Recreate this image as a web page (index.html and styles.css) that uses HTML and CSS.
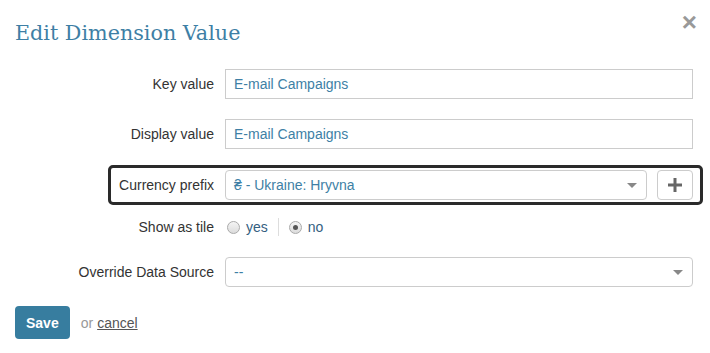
FILE: index.html
```html
<!DOCTYPE html>
<html lang="en">

<head>
    <meta charset="UTF-8">
    <title>Edit Dimension Value</title>
    <link rel="stylesheet" href="styles.css">
</head>

<body>

    <div class="dialog">
        <div class="dialog-header">
            <h1>Edit Dimension Value</h1>
            <span class="close">&times;</span>
        </div>

        <form class="dim-form">
            <div class="row">
                <label class="row-label" for="keyValue">Key value</label>
                <input class="text-input" type="text" id="keyValue" value="E-mail Campaigns">
            </div>

            <div class="row">
                <label class="row-label" for="displayValue">Display value</label>
                <input class="text-input" type="text" id="displayValue" value="E-mail Campaigns">
            </div>

            <!-- highlighted row -->
            <div class="row row-highlight">
                <label class="row-label">Currency prefix</label>
                <div class="select">
                    <span>&#8372; - Ukraine: Hryvna</span>
                    <span class="caret"></span>
                </div>
                <button type="button" class="add-btn">
                    <svg width="14" height="14" viewBox="0 0 14 14">
                        <rect x="5.5" y="0" width="3" height="14" fill="#666"/>
                        <rect x="0" y="5.5" width="14" height="3" fill="#666"/>
                    </svg>
                </button>
            </div>

            <div class="row row-tile">
                <span class="row-label">Show as tile</span>
                <div class="radios">
                    <label class="radio"><span class="dot"></span>yes</label>
                    <span class="sep"></span>
                    <label class="radio"><span class="dot checked"></span>no</label>
                </div>
            </div>

            <div class="row">
                <span class="row-label">Override Data Source</span>
                <div class="select">
                    <span>--</span>
                    <span class="caret"></span>
                </div>
            </div>

            <div class="actions">
                <button type="submit" class="save-btn">Save</button>
                <span class="or">or</span>
                <a href="#" class="cancel">cancel</a>
            </div>
        </form>
    </div>

</body>

</html>
```

FILE: styles.css
```css
body {
    margin: 0;
    background-color: #fff;
    font-family: 'Liberation Sans', Arial, sans-serif;
    font-size: 14px;
    color: #333;
}

.dialog {
    padding: 0 17px 0 15px;
}

.dialog-header {
    display: flex;
    justify-content: space-between;
    align-items: flex-start;
}

h1 {
    margin: 20px 0 0 0;
    font-family: 'DejaVu Serif', 'Liberation Serif', serif;
    font-weight: 400;
    font-size: 20.7px;
    line-height: 26px;
    color: #3e7fa5;
}

.close {
    margin-top: 9px;
    margin-right: -4px;
    font-size: 26px;
    font-weight: 700;
    line-height: 26px;
    color: #999;
}

.dim-form {
    margin-top: 23px;
}

.row {
    display: flex;
    align-items: center;
    margin-bottom: 20px;
}

.row-label {
    width: 199px;
    margin-right: 11px;
    text-align: right;
    flex-shrink: 0;
}

.text-input {
    flex: 1;
    height: 30px;
    box-sizing: border-box;
    padding: 0 8px;
    border: 1px solid #ccc;
    border-radius: 0;
    font-family: inherit;
    font-size: 14px;
    color: #3e7fa5;
    outline: none;
}

/* select look-alike */
.select {
    flex: 1;
    display: flex;
    align-items: center;
    justify-content: space-between;
    height: 30px;
    box-sizing: border-box;
    padding: 0 9px 0 8px;
    border: 1px solid #ccc;
    border-radius: 4px;
    color: #3e7fa5;
}

.caret {
    width: 0;
    height: 0;
    border-left: 5px solid transparent;
    border-right: 5px solid transparent;
    border-top: 5px solid #888;
}

.row-highlight {
    margin-top: -4px;
    margin-left: 93px;
    margin-right: -10px;
    padding: 2px 7px 2px 0;
    border: 3px solid #2a2a2a;
    border-radius: 5px;
    margin-bottom: 12px;
}

.row-highlight .row-label {
    width: 103px;
}

.add-btn {
    display: flex;
    align-items: center;
    justify-content: center;
    width: 36px;
    height: 30px;
    margin-left: 10px;
    padding: 0;
    background: #fff;
    border: 1px solid #ccc;
    border-radius: 4px;
}

.row-tile {
    height: 20px;
}

.radios {
    display: flex;
    align-items: center;
}

.radio {
    display: flex;
    align-items: center;
    color: #34607f;
}

.dot {
    width: 11px;
    height: 11px;
    margin: 0 6px 0 2px;
    border: 1px solid #aaa;
    border-radius: 50%;
    background: linear-gradient(#f4f4f4, #dcdcdc);
    position: relative;
}

.dot.checked::after {
    content: '';
    position: absolute;
    left: 3px;
    top: 3px;
    width: 5px;
    height: 5px;
    border-radius: 50%;
    background-color: #555;
}

.sep {
    width: 1px;
    height: 18px;
    margin: 0 8px 0 10px;
    background-color: #ddd;
}

.actions {
    display: flex;
    align-items: center;
    margin-top: -1px;
}

.save-btn {
    height: 33px;
    padding: 0 11px;
    border: none;
    border-radius: 4px;
    background-color: #377d9f;
    color: #fff;
    font-family: 'Liberation Sans', Arial, sans-serif;
    font-weight: 700;
    font-size: 14px;
}

.or {
    margin-left: 11px;
    color: #999;
}

.cancel {
    margin-left: 4px;
    color: #555;
}
```
